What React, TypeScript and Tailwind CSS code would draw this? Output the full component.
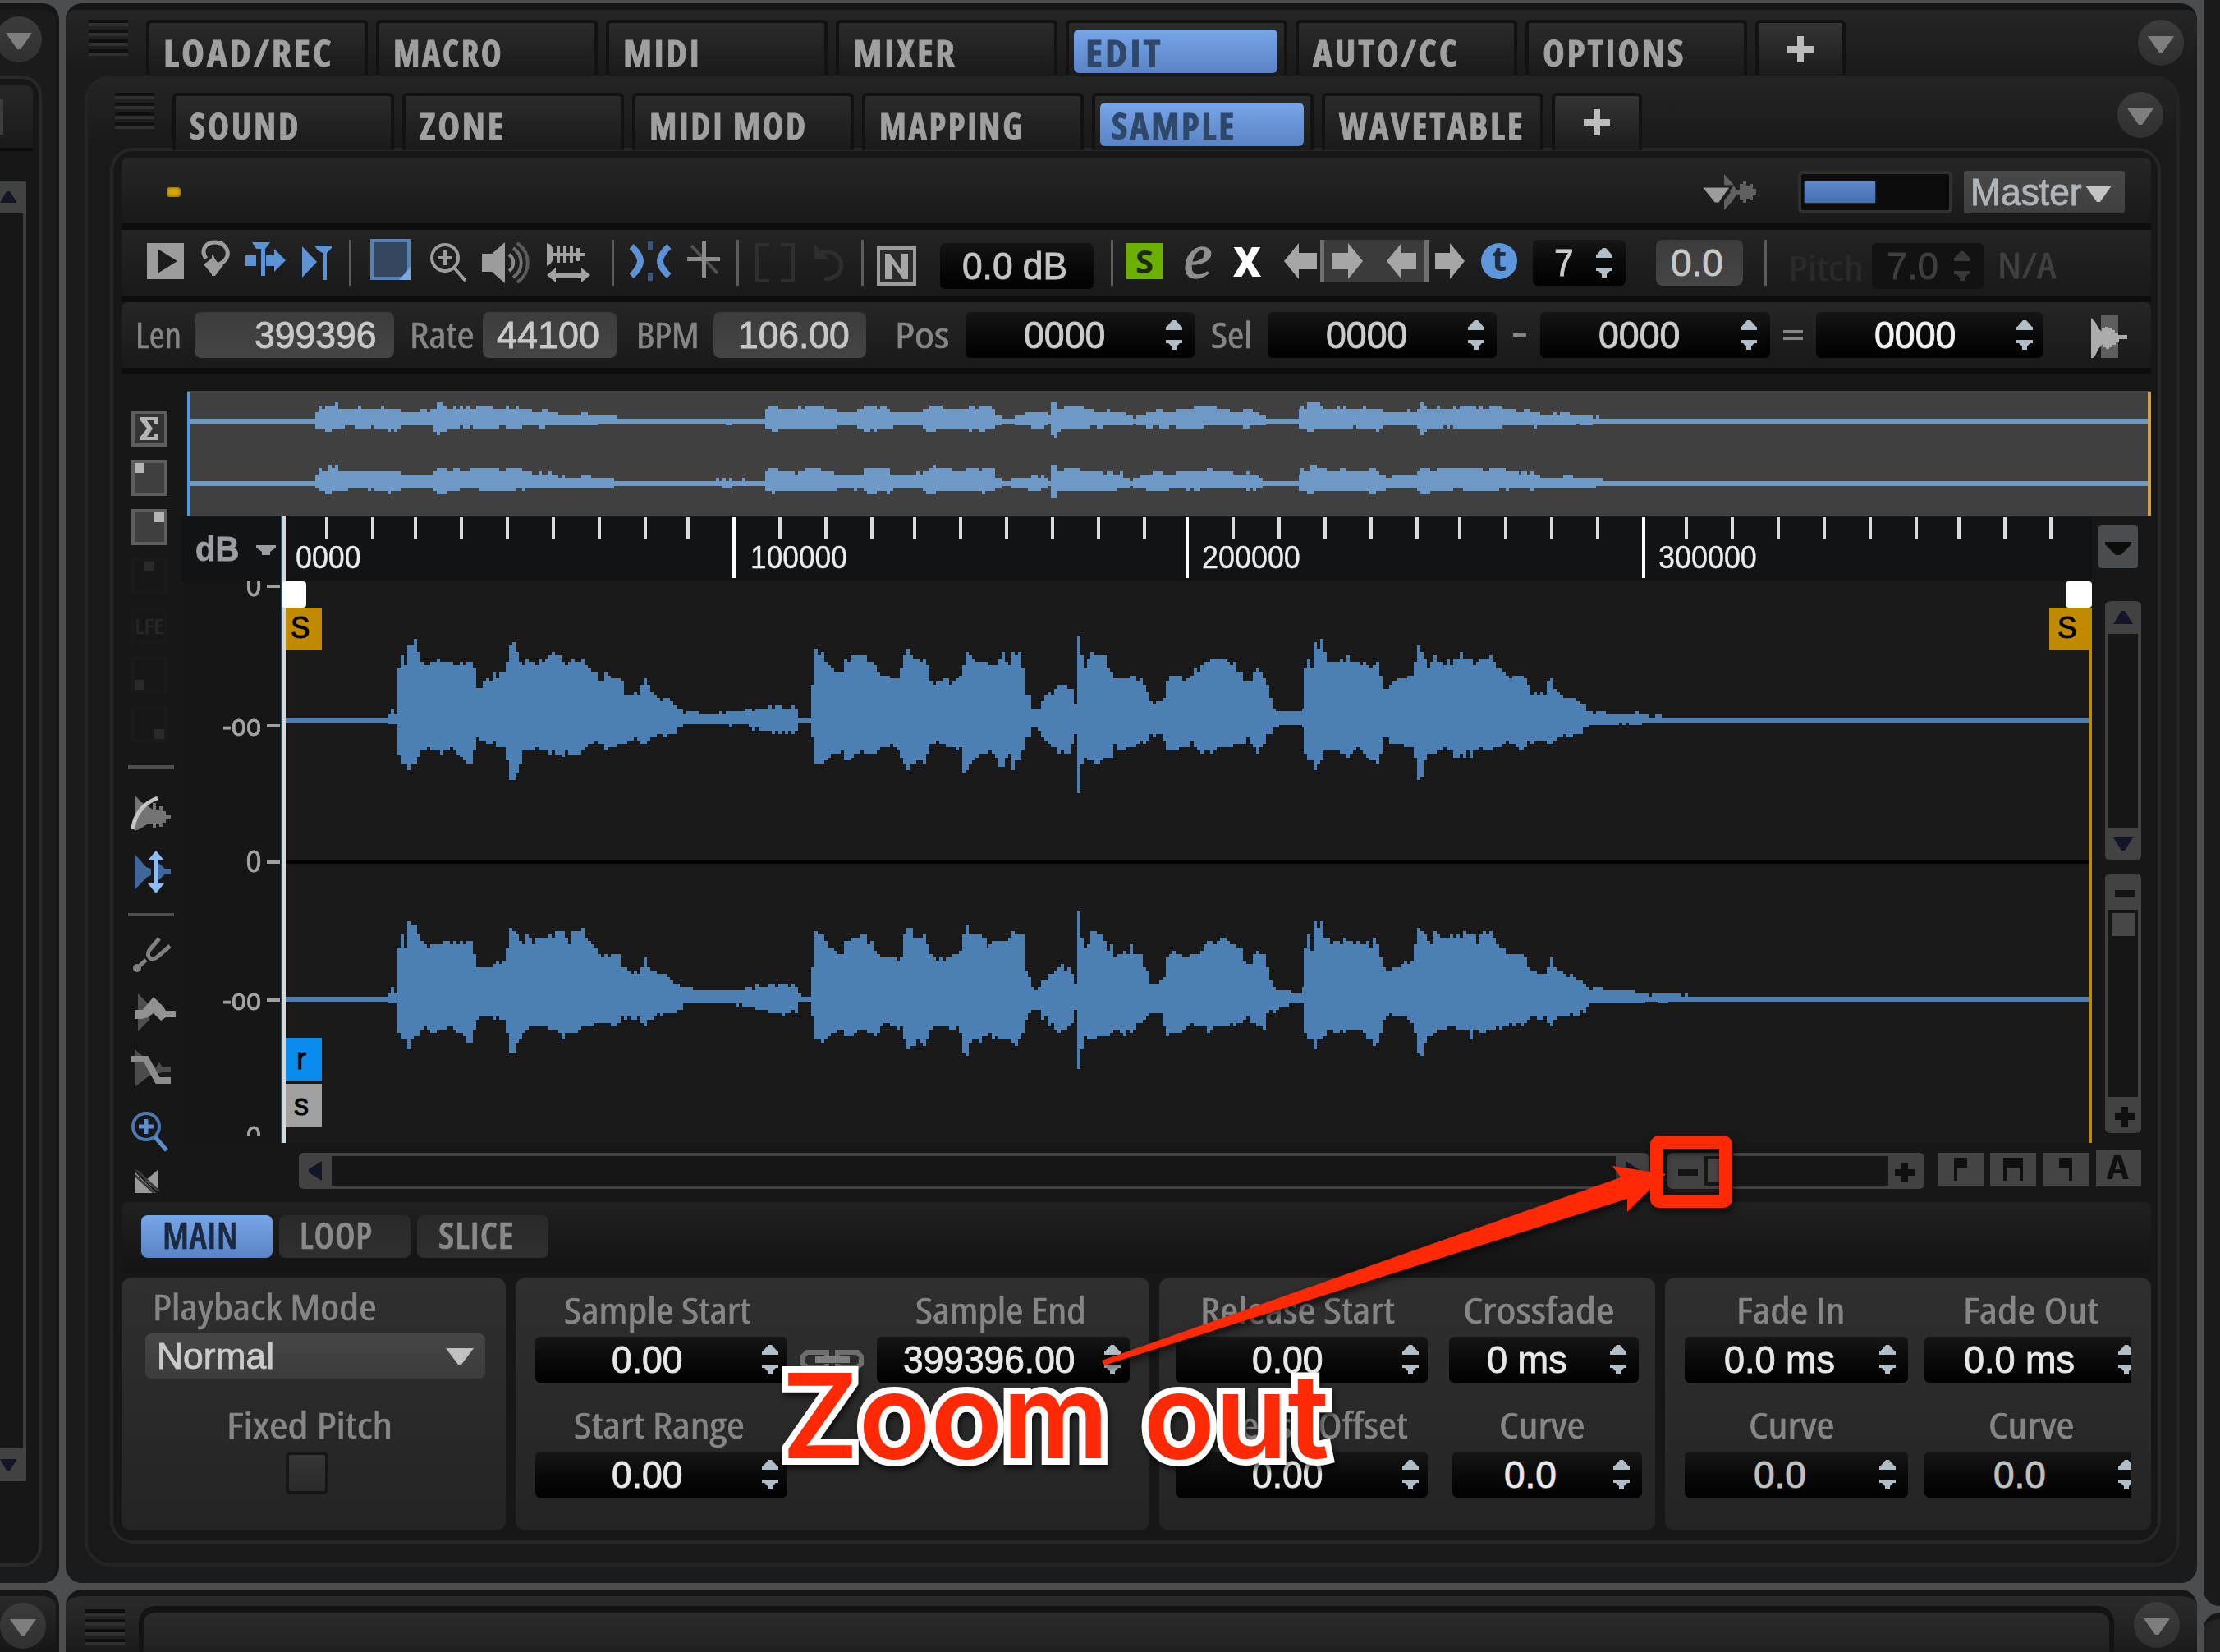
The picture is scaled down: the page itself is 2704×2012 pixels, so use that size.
import { useLayoutEffect, useRef, type ReactNode } from "react";

const SANS = "font-['Liberation_Sans',Arial,sans-serif] [-webkit-text-stroke:0.9px]";
const HUMANIST = "font-['Open_Sans','Noto_Sans',sans-serif] [-webkit-text-stroke:0.7px]";

/* Text squeezed or stretched horizontally to the width of its box. */
function Fit({ className = "", children }: { className?: string; children: ReactNode }) {
  const box = useRef<HTMLSpanElement>(null);
  const text = useRef<HTMLSpanElement>(null);
  useLayoutEffect(() => {
    if (box.current && text.current) {
      text.current.style.transform = `scaleX(${box.current.clientWidth / text.current.offsetWidth})`;
    }
  });
  return (
    <span ref={box} className={`block shrink-0 ${className}`}>
      <span ref={text} className="inline-block origin-left whitespace-pre">
        {children}
      </span>
    </span>
  );
}

/* ---------- waveform data ---------- */

type Tile = { x: number; y: number; sx: number; top: string; bottom: string };
const SY = 2.8;

const even = (n: number) => Math.round(n / 2) * 2;

function steps(tiles: Tile[], side: "top" | "bottom") {
  return tiles.flatMap((t) =>
    t[side].split(" ").map((p) => {
      const [x, y] = p.split(",").map(Number);
      return [even(t.x + x / t.sx), Math.round(t.y + y / SY)] as const;
    }),
  );
}

function wavePath(tiles: Tile[], end: number) {
  const top = steps(tiles, "top");
  const bottom = steps(tiles, "bottom");
  let d = `M${top[0][0]} ${top[0][1]}`;
  for (const [x, y] of top.slice(1)) d += `H${x}V${y}`;
  d += `H${end}`;
  for (let i = bottom.length - 1; i >= 0; i--) d += `V${bottom[i][1]}H${bottom[i][0]}`;
  return d + "Z";
}

const MAIN_L: Tile[] = [
  {
    x: 130, y: 440, sx: 1.742,
    top: "380,1215 596,1205 603,1183 610,1205 617,1048 624,1003 631,1037 638,969 652,947 659,992 666,1026 673,1037 687,1026 701,1015 708,1026 735,1037 749,1026 756,1037 763,1026 777,1048 784,1115 798,1093 805,1082 812,1093 819,1060 826,1082 833,1060 847,1026 854,969 861,958 868,992 875,1026 882,1037 889,1015 896,1026 910,1037 917,1015 924,1026 931,1015 938,1003 945,992 952,1003 966,1026 973,1037 980,1026 987,1015 994,1026 1008,1015 1015,1037 1022,1048 1029,1060 1043,1093 1056,1060 1063,1071 1070,1082 1091,1093 1098,1138 1119,1127 1126,1138 1133,1104 1140,1082 1147,1104 1154,1127 1161,1138 1168,1149 1175,1160 1182,1149 1196,1160 1203,1172 1210,1183 1224,1205 1231,1194 1259,1205 1300,1194 1307,1205 1314,1194 1356,1183 1370,1194 1377,1183 1405,1172 1412,1183 1419,1172 1433,1183 1454,1172 1461,1183 1468,1215",
    bottom: "380,1231 596,1238 617,1340 624,1372 638,1395 645,1372 659,1350 666,1328 680,1317 687,1328 708,1340 715,1328 729,1317 736,1328 743,1340 750,1350 757,1361 764,1372 777,1328 784,1283 791,1295 805,1305 819,1295 826,1317 847,1361 854,1428 868,1406 875,1372 882,1328 910,1317 917,1328 938,1340 945,1328 952,1340 966,1350 973,1328 980,1340 1008,1328 1015,1317 1022,1305 1036,1295 1043,1305 1057,1328 1064,1317 1085,1305 1105,1295 1119,1283 1126,1295 1133,1305 1147,1295 1154,1283 1168,1272 1182,1283 1189,1272 1210,1250 1224,1238 1321,1250 1328,1238 1363,1250 1370,1260 1377,1250 1384,1260 1412,1272 1419,1260 1426,1272 1433,1260 1440,1272 1447,1260 1454,1272 1460,1260 1468,1231",
  },
  {
    x: 980, y: 460, sx: 1.742,
    top: "0,1159 14,1048 21,925 28,947 35,936 42,969 49,981 56,992 63,1003 84,958 91,969 98,947 133,969 147,981 154,1003 161,1015 182,1026 203,992 210,947 217,925 224,947 231,958 245,969 252,958 259,981 266,1037 273,1048 280,1037 294,1026 308,1048 315,1037 322,1026 329,1015 336,981 343,936 350,947 357,958 364,969 391,981 412,958 419,936 426,969 433,981 440,936 447,947 454,936 461,992 468,1082 482,1127 503,1104 510,1082 517,1071 524,1082 531,1060 538,1048 559,1060 572,1115 579,880 586,947 593,992 600,958 607,936 614,947 642,992 649,1003 656,1026 691,1015 705,1037 712,1026 719,1048 726,1071 733,1104 740,1115 747,1104 761,1093 768,1037 775,1015 803,1037 810,1026 817,1015 824,992 831,1003 838,981 845,969 859,958 894,969 901,981 908,969 915,1003 929,1037 950,1003 957,992 964,1003 971,1026 978,1048 985,1093 992,1127 999,1138 1054,1127 1060,992 1067,958 1074,992 1081,902 1088,925 1095,891 1102,936 1109,969 1137,958 1144,969 1151,947 1158,969 1179,981 1186,969 1193,981 1200,992 1207,981 1214,969 1221,1015 1228,1060 1242,1048 1249,1037 1256,1026 1277,1015 1291,969 1298,914 1305,936 1312,958 1319,992 1326,969 1333,947 1340,969 1354,981 1361,958 1368,981 1375,958 1389,936 1396,958 1417,981 1424,969 1431,958 1452,947 1459,969 1466,992 1480,1003 1487,1015 1494,1026 1501,1015",
    bottom: "0,1175 14,1227 21,1317 42,1305 49,1295 56,1283 77,1272 84,1305 98,1295 105,1283 119,1272 126,1283 154,1272 161,1260 182,1250 189,1260 196,1272 203,1295 210,1317 217,1338 224,1317 238,1305 252,1317 259,1283 266,1250 280,1238 287,1250 301,1260 322,1272 329,1260 336,1350 343,1338 350,1317 357,1305 364,1295 371,1283 391,1272 398,1283 405,1295 412,1328 426,1295 433,1283 440,1338 447,1305 461,1272 468,1227 482,1193 496,1205 503,1227 510,1238 517,1250 524,1260 538,1283 545,1272 552,1283 566,1250 572,1215 579,1417 586,1317 593,1295 600,1305 614,1317 628,1305 635,1295 656,1250 663,1272 684,1260 705,1250 712,1238 719,1250 726,1238 733,1215 740,1227 747,1215 761,1238 768,1272 796,1260 817,1238 824,1260 831,1272 838,1283 845,1272 859,1283 866,1272 873,1260 908,1250 936,1227 943,1250 950,1260 957,1283 964,1260 971,1250 978,1215 992,1193 1006,1183 1054,1193 1060,1283 1067,1305 1081,1338 1088,1317 1095,1305 1102,1272 1137,1283 1151,1295 1158,1283 1165,1272 1172,1260 1179,1272 1186,1283 1193,1295 1200,1305 1214,1317 1221,1283 1228,1227 1242,1250 1270,1260 1291,1295 1298,1372 1305,1361 1312,1305 1319,1283 1340,1272 1354,1260 1361,1272 1375,1295 1389,1283 1396,1295 1403,1272 1410,1295 1417,1272 1431,1260 1438,1272 1459,1260 1480,1250 1487,1238 1494,1250 1508,1260",
  },
  {
    x: 1850, y: 460, sx: 1.836,
    top: "0,1015 11,1026 18,1048 26,1082 33,1071 40,1082 48,1071 55,1082 62,1037 70,1026 77,1060 84,1071 92,1082 99,1093 129,1104 136,1115 151,1138 165,1149 173,1138 195,1149 261,1138 268,1149 290,1159 305,1149 319,1159",
    bottom: "0,1272 11,1260 18,1238 26,1250 33,1238 62,1250 77,1238 84,1227 99,1215 106,1227 121,1215 143,1193 158,1183 224,1175 231,1183 238,1175 246,1183 275,1175",
  },
];

const MAIN_R: Tile[] = [
  {
    x: 130, y: 980, sx: 1.742,
    top: "380,655 596,644 603,622 610,644 617,488 624,443 631,488 638,398 645,409 659,443 666,465 673,476 680,488 687,476 715,465 729,476 736,465 743,476 750,465 757,476 764,465 777,510 784,555 819,544 826,533 833,544 840,533 847,488 854,421 861,432 868,443 875,465 882,476 889,443 896,454 903,476 910,454 938,443 945,454 952,432 973,454 980,476 987,432 1008,421 1015,454 1022,465 1029,476 1036,488 1043,510 1050,521 1057,510 1064,521 1071,510 1091,555 1105,566 1112,577 1119,566 1126,577 1133,555 1140,521 1147,555 1154,566 1168,577 1189,588 1196,600 1203,611 1217,622 1245,633 1356,622 1370,633 1377,611 1384,622 1405,611 1419,622 1426,611 1447,622 1454,611 1461,622 1468,644 1475,655",
    bottom: "380,672 596,678 617,778 624,801 638,834 645,801 652,790 666,768 673,756 680,768 687,778 701,768 722,756 736,768 743,778 757,790 764,812 777,768 784,734 791,723 819,734 826,723 833,734 847,778 854,846 868,812 875,801 882,778 889,768 896,756 938,768 959,778 966,801 973,778 1001,768 1008,756 1036,745 1071,756 1085,745 1091,723 1098,734 1105,723 1112,734 1126,723 1133,745 1140,756 1147,734 1161,723 1168,712 1175,723 1182,712 1210,700 1224,678 1335,689 1342,678 1349,689 1377,700 1405,712 1433,723 1440,712 1454,700 1461,712 1468,672",
  },
  {
    x: 980, y: 1000, sx: 1.742,
    top: "0,599 14,499 21,375 28,386 42,409 49,432 63,443 70,454 84,409 98,398 119,386 133,420 140,409 147,443 154,454 161,465 196,476 203,465 210,386 217,364 231,398 252,386 259,420 266,454 273,465 280,476 287,465 294,476 301,465 315,454 329,443 336,386 343,353 350,386 378,398 385,432 391,420 398,409 433,398 440,375 447,386 468,510 475,532 482,566 489,577 496,566 503,543 517,521 531,510 538,499 545,487 552,510 559,499 566,521 572,555 579,308 586,398 593,432 600,420 607,375 621,386 635,409 642,443 649,420 656,465 663,454 677,443 684,454 691,420 698,454 719,499 726,510 733,555 754,543 761,532 768,465 775,454 782,443 789,454 803,465 817,454 838,443 845,420 852,409 866,420 873,409 880,398 894,409 901,420 915,432 929,476 936,487 950,454 957,443 964,454 978,499 985,543 992,566 999,577 1033,588 1054,566 1060,432 1067,386 1074,443 1081,342 1088,364 1095,342 1102,398 1116,420 1123,409 1137,420 1144,398 1151,409 1165,420 1172,409 1179,420 1193,409 1200,432 1207,398 1214,420 1221,465 1228,499 1235,510 1249,499 1263,487 1270,476 1277,487 1284,476 1291,420 1298,364 1305,375 1312,386 1319,409 1326,420 1333,375 1340,386 1347,398 1368,386 1375,398 1382,386 1389,398 1396,375 1403,386 1424,420 1431,386 1438,375 1445,386 1452,375 1459,398 1466,420 1473,432 1487,454",
    bottom: "0,616 14,667 21,745 35,756 42,745 49,734 56,723 70,712 84,734 105,723 112,712 133,723 147,734 154,723 161,700 168,689 182,700 196,712 203,700 210,745 217,778 224,768 238,745 245,756 252,768 259,745 266,712 273,700 308,712 322,700 329,723 336,790 343,801 350,756 357,745 371,756 378,734 391,723 398,745 405,734 412,745 440,756 447,768 454,745 461,723 468,678 475,656 482,644 503,678 510,667 517,700 524,689 531,712 538,723 545,712 559,700 566,689 572,644 579,846 586,778 593,734 600,745 621,734 649,723 656,712 670,723 677,734 684,712 691,723 698,712 705,689 719,678 726,667 733,656 761,700 768,734 775,723 803,712 810,700 817,689 824,700 852,723 859,712 866,700 901,689 908,700 915,689 929,678 936,667 943,689 957,700 971,712 978,656 985,644 992,656 999,644 1006,633 1027,622 1060,723 1067,745 1081,778 1088,745 1102,734 1109,712 1123,723 1137,712 1144,723 1151,712 1186,723 1193,745 1207,768 1214,756 1221,723 1228,678 1235,667 1242,656 1249,667 1277,678 1284,689 1291,723 1298,790 1305,801 1312,756 1319,734 1333,723 1340,712 1361,700 1382,712 1410,745 1417,712 1431,723 1445,712 1466,700 1473,712 1480,700 1494,689 1501,700 1508,689",
  },
  {
    x: 1850, y: 1000, sx: 1.836,
    top: "0,454 11,465 18,499 26,510 40,521 62,499 70,465 77,499 84,510 99,521 106,532 114,521 121,532 129,543 143,555 151,566 158,577 165,566 187,577 261,588 290,599 297,588 364,599 371,588 378,599",
    bottom: "0,689 4,700 11,689 18,678 26,667 40,678 55,667 62,689 70,700 77,678 84,667 114,656 121,667 136,644 143,656 151,633 158,622 283,616 312,622 334,616",
  },
];

const OVER_L: Tile[] = [
  {
    x: 130, y: 440, sx: 1.742,
    top: "174,196 443,174 450,152 457,163 464,152 485,141 492,163 533,152 540,163 582,152 589,163 624,174 666,163 680,174 687,163 701,141 714,152 721,163 735,152 742,163 749,152 756,163 763,152 770,163 784,152 819,163 847,152 854,163 868,152 875,163 903,174 924,163 938,174 959,185 1008,174 1022,185 1084,196 1398,163 1405,152 1426,163 1468,152 1475,163",
    bottom: "174,213 443,230 464,241 478,230 506,219 526,230 561,219 568,230 596,241 603,230 610,241 617,230 624,219 694,241 701,252 708,241 721,230 749,219 756,230 770,219 777,230 833,219 847,230 882,219 917,230 931,219 1035,219 1042,213 1314,219 1328,213 1398,230 1412,241 1426,230",
  },
  {
    x: 980, y: 460, sx: 1.742,
    top: "0,96 42,107 70,118 112,107 126,96 154,107 161,96 175,107 182,118 252,107 266,96 294,107 349,96 363,107 370,96 398,107 405,129 419,140 447,129 468,118 517,129 524,84 538,107 552,96 593,107 614,118 642,107 649,118 684,129 698,140 705,129 726,118 747,107 761,118 789,107 824,96 873,107 901,118 929,107 950,118 964,129 978,140 1047,107 1053,96 1060,107 1067,84 1095,96 1102,107 1130,96 1137,107 1144,96 1151,107 1186,96 1193,107 1228,118 1277,107 1284,118 1298,107 1305,84 1312,96 1319,107 1340,96 1347,107 1375,96 1382,107 1389,96 1424,107 1431,96 1438,107 1452,96 1480,107 1508,118",
    bottom: "0,174 70,163 112,174 126,185 140,174 147,185 154,174 189,163 252,174 259,185 280,174 349,185 356,174 370,185 384,174 405,163 419,157 447,163 482,174 510,163 517,157 524,196 531,207 538,185 545,174 607,163 621,174 635,163 698,157 705,163 726,174 740,163 754,174 775,163 789,174 845,163 929,174 943,163 978,157 1047,174 1067,185 1081,174 1165,163 1172,174 1214,185 1221,174 1228,163 1298,174 1305,196 1312,185 1319,174 1354,163 1361,174 1368,163 1375,174 1480,163",
  },
  {
    x: 1850, y: 460, sx: 1.836,
    top: "0,118 11,107 26,118 48,129 77,118 84,129 92,118 114,129 165,140 173,129 180,140",
    bottom: "0,163 33,174 40,163 129,157 136,163 165,157",
  },
];

const OVER_R: Tile[] = [
  {
    x: 130, y: 440, sx: 1.742,
    top: "174,409 443,387 450,365 457,376 471,353 478,365 485,353 492,376 624,387 694,376 701,365 721,376 735,365 749,376 770,365 833,376 847,365 882,376 903,387 917,376 924,387 938,376 945,387 959,398 966,387 973,398 1008,387 1029,398 1077,409 1293,398 1300,409 1307,398 1314,409 1321,398 1328,409 1349,398 1356,409 1398,376 1405,365 1426,376 1461,387 1468,376",
    bottom: "174,425 443,432 450,442 464,453 478,442 513,432 547,432 554,442 561,432 568,442 596,453 603,442 624,432 694,442 701,453 721,442 749,432 791,442 868,432 882,442 889,432 1077,425 1307,432 1328,425 1398,442 1412,453 1419,442",
  },
  {
    x: 980, y: 460, sx: 1.742,
    top: "0,308 35,319 63,330 126,308 182,330 238,319 245,330 252,319 266,308 273,297 280,308 315,319 343,308 370,319 377,308 405,342 419,353 440,342 482,330 496,342 503,330 510,342 517,353 524,297 538,319 552,308 586,319 635,330 642,319 656,330 670,319 677,342 691,353 698,342 712,330 740,319 761,330 789,319 852,308 866,319 908,330 936,319 943,330 964,342 971,353 1047,330 1053,308 1060,319 1074,297 1088,308 1109,319 1137,308 1151,319 1200,308 1214,319 1221,330 1235,342 1249,330 1298,319 1305,308 1326,319 1340,308 1438,319 1452,308 1487,319",
    bottom: "0,386 70,375 105,386 112,375 126,386 133,397 154,386 175,397 182,386 189,375 252,386 259,397 280,386 377,397 384,386 405,375 419,369 440,375 475,386 503,375 517,369 524,409 538,386 663,375 691,369 698,375 726,386 775,375 810,386 817,375 824,386 838,375 936,386 943,375 950,386 957,375 971,369 1047,386 1067,397 1081,386 1200,397 1214,386 1235,375 1298,386 1305,397 1326,386 1375,375 1396,386 1473,375 1487,386 1494,375",
  },
  {
    x: 1850, y: 460, sx: 1.836,
    top: "0,330 4,319 18,330 26,319 33,330 48,342 99,330 121,342 187,353",
    bottom: "0,375 26,386 33,375 173,369",
  },
];

const MINOR_TICKS = [
  398, 454, 506, 562, 618, 674, 730, 786, 838, 950, 1006, 1062, 1114, 1170, 1226, 1282, 1338, 1394, 1502, 1558, 1614,
  1670, 1726, 1778, 1834, 1890, 1946, 2054, 2110, 2166, 2222, 2278, 2334, 2386, 2442, 2498,
];
const MAJOR_TICKS = [894, 1446, 2002];

/* ---------- small parts ---------- */

function Grip() {
  return (
    <div className="flex h-[44px] w-12 shrink-0 flex-col gap-1">
      {[0, 1, 2, 3].map((i) => (
        <div key={i} className="h-2 shrink-0 border-t-4 border-[#101010] bg-[#303030]" />
      ))}
    </div>
  );
}

function RoundMenu({ className = "" }: { className?: string }) {
  return (
    <div
      className={`flex h-14 w-14 shrink-0 items-center justify-center rounded-full bg-linear-to-b from-[#3c3c3c] to-[#303030] ${className}`}
    >
      <svg viewBox="0 0 32 20" className="mt-1 h-5 w-8 fill-[#7e7e7e]">
        <path d="M0 0h32L18 20h-4z" />
      </svg>
    </div>
  );
}

function Tab({ w, label, active = false }: { w: string; label: string; active?: boolean }) {
  return (
    <div className="flex h-full w-[270px] shrink-0 rounded-t-md border-x-4 border-t-4 border-[#121212] bg-linear-to-b from-[#2b2b2b] to-[#1a1a1a]">
      {active ? (
        <div className="mt-2 ml-[6px] flex h-[53px] w-[248px] items-center rounded-md bg-linear-to-b from-[#77a6e9] to-[#5a83c5] pt-[2px] pl-[14px] text-[#2f4768]">
          <Fit className={w}>{label}</Fit>
        </div>
      ) : (
        <div className="mt-2 flex h-[53px] items-center pt-[2px] pl-[17px] text-[#a0a0a0]">
          <Fit className={w}>{label}</Fit>
        </div>
      )}
    </div>
  );
}

function PlusTab() {
  return (
    <div className="flex h-full w-[110px] shrink-0 justify-center rounded-t-md border-x-4 border-t-4 border-[#121212] bg-linear-to-b from-[#343434] to-[#1c1c1c] pt-4">
      <svg viewBox="0 0 32 32" className="h-8 w-8 fill-[#bcbcbc]">
        <path d="M12 0h8v12h12v8H20v12h-8V20H0v-8h12z" />
      </svg>
    </div>
  );
}

const TAB_TEXT =
  "font-['Open_Sans','Noto_Sans',sans-serif] text-[45px] leading-[53px] font-bold tracking-[0.06em] [font-stretch:75%] [-webkit-text-stroke:0.8px]";

function Stepper({ className = "" }: { className?: string }) {
  return (
    <svg viewBox="0 0 20 36" className={`h-9 w-5 shrink-0 fill-[#b2bec7] ${className}`}>
      <path d="M8 0h4l7 8h1v4H0V8h1zM0 24h20v4h-3l-4 4v4H7v-4l-4-4H0z" />
    </svg>
  );
}

function Field({
  box,
  text,
  step,
  color = "text-[#cccccc]",
  children,
}: {
  box: string;
  text: string;
  step: string;
  color?: string;
  children: ReactNode;
}) {
  return (
    <div
      className={`flex h-14 shrink-0 items-center overflow-hidden rounded-md bg-linear-to-b from-[#161616] to-[#020202] ${SANS} text-[46px] leading-none ${color} ${box}`}
    >
      <Fit className={text}>{children}</Fit>
      <Stepper className={`ml-auto ${step}`} />
    </div>
  );
}

function GrayValue({ box, text, children }: { box: string; text: string; children: ReactNode }) {
  return (
    <div
      className={`flex h-14 shrink-0 items-center rounded-lg bg-linear-to-b from-[#3c3c3c] to-[#454545] ${SANS} text-[46px] leading-none text-[#c8c8c8] ${box}`}
    >
      <Fit className={text}>{children}</Fit>
    </div>
  );
}

const Sep = ({ className }: { className: string }) => <div className={`h-14 w-[3px] shrink-0 bg-[#5c5c5c] ${className}`} />;

function Icon({ w, h, className, children }: { w: number; h: number; className: string; children: ReactNode }) {
  return (
    <svg width={w} height={h} viewBox={`0 0 ${w} ${h}`} className={`shrink-0 ${className}`}>
      {children}
    </svg>
  );
}

/* ---------- bars ---------- */

function SampleHeader() {
  return (
    <div className="flex h-20 shrink-0 items-center rounded-t-lg bg-linear-to-b from-[#262626] to-[#191919]">
      <div className="ml-[55px] mt-1 h-3 w-[17px] rounded-sm bg-[#dba800] shadow-[inset_0_0_4px_#6b5200]" />
      <Icon w={69} h={45} className="ml-[1851px] mt-1">
        <path d="M29 0l10 11 5 8h4v-7h4v-3h4v5h4v-2h4v6h4v8h-4v6h-4v-2h-4v5h-4v-4h-4v-6h-4l-5 8-10 11V32l8-10-8-9z" fill="#606060" />
        <path d="M0 15h38L23 36h-6z" fill="#9c9c9c" stroke="#1e1e1e" strokeWidth="3" />
      </Icon>
      <div className="ml-[50px] mt-1 flex h-[52px] w-[188px] shrink-0 items-center rounded-md border-4 border-[#303030] bg-[#0c0c0c] pl-1">
        <div className="h-[26px] w-[86px] bg-linear-to-b from-[#5d88cb] to-[#466fae] shadow-[0_0_2px_#466fae]" />
      </div>
      <div
        className={`ml-[14px] mt-1 flex h-[52px] w-[196px] shrink-0 items-center rounded-sm bg-linear-to-b from-[#484848] to-[#3f3f3f] pl-2 ${SANS} text-[46px] leading-none text-[#b0b5ba]`}
      >
        <Fit className="w-[136px]">Master</Fit>
        <Icon w={32} h={20} className="ml-1 mt-1 fill-[#c4c4c4]">
          <path d="M0 0h32L18 20h-4z" />
        </Icon>
      </div>
    </div>
  );
}

function Toolbar() {
  return (
    <div className="flex h-20 shrink-0 items-center bg-linear-to-b from-[#242424] to-[#191919]">
      <Icon w={45} h={44} className="ml-[31px] -mt-1">
        <path d="M0 0h45v44H0z" fill="#9c9c9c" />
        <path d="M13 7l24 15-24 15z" fill="#1c1c1c" />
      </Icon>
      <Icon w={37} h={44} className="ml-5 -mt-3">
        <path d="M7 23C0 13 6 3 18 3s20 12 12 22c-3 4-7 5-12 6" fill="none" stroke="#9c9c9c" strokeWidth="5" />
        <path d="M17 20v22h-3L4 30l3-2z" fill="#9c9c9c" />
        <path d="M14 18v26h4l10-13-6-2z" fill="#9c9c9c" />
      </Icon>
      <Icon w={49} h={42} className="ml-[18px] -mt-2">
        <path d="M8 0h22l-6 8v33h-5V8h-6zM0 16h13v13H0zM25 16h10V8l14 14-14 14v-7H25z" fill="#5c92d6" />
      </Icon>
      <Icon w={36} h={42} className="ml-5">
        <path d="M0 1l18 19L0 39zM15 0h21v3l-6 6v33h-5V9l-6-3z" fill="#5c92d6" />
      </Icon>
      <Sep className="ml-[21px]" />
      <Icon w={49} h={50} className="ml-[23px] -mt-2">
        <path d="M2 2h45v46H2z" fill="#35475f" stroke="#5580b8" strokeWidth="4" />
        <path d="M49 34v16H35z" fill="#7aa8e4" />
      </Icon>
      <Icon w={45} h={48} className="ml-6">
        <circle cx="18" cy="18" r="16" fill="none" stroke="#9c9c9c" strokeWidth="4" />
        <path d="M9 18h18M18 9v18M29 30l14 16" stroke="#9c9c9c" strokeWidth="4" fill="none" />
      </Icon>
      <Icon w={58} h={50} className="ml-[18px]">
        <path d="M0 14h12L28 0v50L12 36H0z" fill="#9c9c9c" />
        <path d="M33 15c7 5 7 15 0 20" fill="none" stroke="#8c8c8c" strokeWidth="4" />
        <path d="M38 7c13 9 13 27 0 36" fill="none" stroke="#6c6c6c" strokeWidth="4" />
        <path d="M43 1c17 12 17 36 0 48" fill="none" stroke="#5c5c5c" strokeWidth="4" />
      </Icon>
      <Icon w={53} h={48} className="ml-[21px]">
        <path d="M0 0l5 2 3 6v4h4V4h4v8h4V4h4v8h4V4h4v8h4V6h4v6h6v4h-6v6h-4v-6h-4v8h-4v-8h-4v8h-4v-8h-4v8h-4v-8H8v4l-4 6-4 2zM0 39l11-9v6h31v-6l11 9-11 9v-6H11v6z" fill="#a2a2a2" />
      </Icon>
      <Sep className="ml-[26px]" />
      <Icon w={54} h={48} className="ml-[17px] -mt-1">
        <path d="M4 6c5 4 11 12 11 18S9 38 4 42M50 6c-5 4-11 12-11 18s6 14 11 18" fill="none" stroke="#5c92d6" strokeWidth="8" />
        <path d="M24 0h6v10h-6zM24 38h6v10h-6z" fill="#36567f" />
      </Icon>
      <Icon w={40} h={44} className="ml-[18px] -mt-2">
        <path d="M5 5l32 34" stroke="#505050" strokeWidth="4" />
        <path d="M0 19h18V0h5v19h17v5H23v20h-5V24H0z" fill="#8c8c8c" />
      </Icon>
      <Sep className="ml-5" />
      <Icon w={48} h={48} className="ml-5">
        <path d="M17 2H2v44h15M31 2h15v44H31" fill="none" stroke="#2f2f2f" strokeWidth="4" />
      </Icon>
      <Icon w={40} h={44} className="ml-[22px]">
        <path d="M4 12c22-10 34 6 30 18-2 7-10 12-20 12" fill="none" stroke="#2e2e2e" strokeWidth="5" />
        <path d="M2 0v18h18z" fill="#2e2e2e" />
      </Icon>
      <Sep className="ml-[19px]" />
      <Icon w={48} h={48} className="ml-4 mt-2">
        <path d="M2 2h44v44H2z" fill="#2b2b2b" stroke="#9c9c9c" strokeWidth="4" />
        <path d="M10 40V9h6l14 20V9h8v31h-6L18 20v20z" fill="#a6a6a6" />
      </Icon>
      <div className={`ml-[29px] mt-2 flex h-14 w-[187px] shrink-0 items-center rounded-md bg-linear-to-b from-[#141414] to-[#020202] pl-[27px] ${SANS} text-[46px] leading-none text-[#c4c4c4]`}>
        <Fit className="w-[128px]">0.0 dB</Fit>
      </div>
      <Sep className="ml-[21px]" />
      <div className="ml-4 -mt-1 flex h-11 w-11 shrink-0 items-center justify-center bg-[#6bb000] font-['Open_Sans',sans-serif] text-[40px] leading-none font-bold text-[#1d2a0c]">S</div>
      <div className="ml-6 -mt-4 flex h-12 w-[38px] shrink-0 items-center justify-center font-['Liberation_Serif',serif] text-[78px] leading-none text-[#8f8f8f] italic [-webkit-text-stroke:1.5px]">e</div>
      <div className="ml-6 -mt-1 flex h-11 w-[34px] shrink-0 items-center font-['Open_Sans',sans-serif] text-[50px] leading-none font-extrabold text-white">
        <Fit className="w-[34px]">X</Fit>
      </div>
      <Icon w={40} h={44} className="ml-7 -mt-1 fill-[#a6a6a6]">
        <path d="M0 22L18 0v12h22v20H18v12z" />
      </Icon>
      <div className="ml-1 -mt-1 flex h-[52px] w-[132px] shrink-0 items-center justify-between border-x-[5px] border-[#707070] bg-[#3b3b3b] px-[10px]">
        <Icon w={37} h={44} className="fill-[#a6a6a6]">
          <path d="M37 22L19 0v12H0v20h19v12z" />
        </Icon>
        <Icon w={36} h={44} className="fill-[#a6a6a6]">
          <path d="M0 22L18 0v12h18v20H18v12z" />
        </Icon>
      </div>
      <Icon w={36} h={44} className="ml-2 -mt-1 fill-[#a6a6a6]">
        <path d="M36 22L18 0v12H0v20h18v12z" />
      </Icon>
      <div className="ml-5 -mt-1 flex h-11 w-11 shrink-0 items-center justify-center rounded-full bg-[#5f97dc] pb-2 font-['Open_Sans',sans-serif] text-[42px] leading-none font-bold text-[#1e2d42]">t</div>
      <Field box="ml-[19px] w-[113px]" text="ml-[26px] w-[24px]" step="mr-[16px]">7</Field>
      <GrayValue box="ml-[37px] w-[106px]" text="ml-[18px] w-[64px]">0.0</GrayValue>
      <Sep className="ml-[26px]" />
      <div className={`ml-[26px] mt-3 ${HUMANIST} text-[42px] leading-none text-[#2a2a2a] [font-stretch:75%]`}>
        <Fit className="w-[92px]">Pitch</Fit>
      </div>
      <div className={`mt-2 ml-[10px] flex h-14 w-[136px] shrink-0 items-center rounded-md bg-[#121212] ${SANS} text-[46px] leading-none text-[#3e3e3e]`}>
        <Fit className="ml-[18px] w-[63px]">7.0</Fit>
        <svg viewBox="0 0 20 36" className="mr-4 ml-auto h-9 w-5 shrink-0 fill-[#383838]">
          <path d="M8 0h4l7 8h1v4H0V8h1zM0 24h20v4h-3l-4 4v4H7v-4l-4-4H0z" />
        </svg>
      </div>
      <div className={`ml-[17px] mt-1 ${HUMANIST} text-[44px] leading-none text-[#404040] [font-stretch:75%]`}>
        <Fit className="w-[71px]">N/A</Fit>
      </div>
    </div>
  );
}

const LABEL = `${HUMANIST} text-[43px] leading-[48px] text-[#868686] [font-stretch:75%]`;

function InfoBar() {
  return (
    <div className="flex h-20 shrink-0 items-center rounded-t-lg bg-linear-to-b from-[#262626] to-[#191919]">
      <Fit className={`ml-[17px] w-[56px] ${LABEL}`}>Len</Fit>
      <GrayValue box="ml-4 w-[243px]" text="ml-[73px] w-[149px]">399396</GrayValue>
      <Fit className={`ml-[19px] w-[79px] ${LABEL}`}>Rate</Fit>
      <GrayValue box="ml-[10px] w-[163px]" text="ml-[17px] w-[125px]">44100</GrayValue>
      <Fit className={`ml-[24px] w-[77px] ${LABEL}`}>BPM</Fit>
      <GrayValue box="ml-[17px] w-[186px]" text="ml-[30px] w-[136px]">106.00</GrayValue>
      <Fit className={`ml-[35px] w-[66px] ${LABEL}`}>Pos</Fit>
      <Field box="ml-5 w-[279px]" text="ml-[71px] w-[99px]" step="mr-[15px]">0000</Field>
      <Fit className={`ml-[20px] w-[50px] ${LABEL}`}>Sel</Fit>
      <Field box="ml-[19px] w-[279px]" text="ml-[71px] w-[99px]" step="mr-[15px]">0000</Field>
      <div className="ml-5 h-1 w-4 shrink-0 bg-[#858585]" />
      <Field box="ml-[17px] w-[280px]" text="ml-[71px] w-[99px]" step="mr-4">0000</Field>
      <div className="ml-4 h-3 w-6 shrink-0 border-y-4 border-[#858585]" />
      <Field box="ml-4 w-[276px]" text="ml-[71px] w-[99px]" step="mr-3" color="text-[#f2f2f2]">0000</Field>
      <Icon w={45} h={52} className="ml-[59px] mt-1">
        <path d="M12 0h21v52H12z" fill="#5e5e5e" />
        <path d="M0 3l5 5 4 8 4 4v-4h4v-2h4v2h4v2h4v3h4v3h11v5H34v4h-4v3h-4v3h-4v2h-4v-2h-4v-4l-5 6-4 8-5 6z" fill="#acacac" />
      </Icon>
    </div>
  );
}

/* ---------- editor ---------- */

function ChannelBox({ on, dot }: { on?: boolean; dot: string }) {
  return (
    <div className={`h-11 w-11 shrink-0 border-4 ${on ? "border-[#5e5e5e] bg-[#3f3f3f]" : "border-[#1a1a1a] bg-[#171717]"}`}>
      <div className={`h-3 w-3 ${on ? "bg-[#b4b4b4]" : "bg-[#2a2a2a]"} ${dot}`} />
    </div>
  );
}

function ToolColumn() {
  return (
    <div className="flex w-[73px] shrink-0 flex-col pt-[44px] pl-3">
      <div className="flex flex-col gap-4">
        <div className="flex h-11 w-11 items-center justify-center border-4 border-[#5e5e5e] bg-[#333]">
          <Icon w={22} h={28} className="">
            <path d="M0 0h21v8h-4V4H8l7 10-7 10h9v-4h4v8H0v-4l8-10L0 4z" fill="#b4b4b4" />
          </Icon>
        </div>
        <ChannelBox on dot="" />
        <ChannelBox on dot="ml-auto" />
        <ChannelBox dot="mx-auto" />
        <div className={`flex h-11 w-11 items-center justify-center border-4 border-[#191919] ${HUMANIST} text-[26px] leading-none text-[#272727] [font-stretch:75%]`}>
          <Fit className="w-9">LFE</Fit>
        </div>
        <ChannelBox dot="mt-6" />
        <ChannelBox dot="mt-6 ml-auto" />
      </div>
      <div className="mt-7 -ml-1 h-1 w-14 bg-[#4f4f4f]" />
      <Icon w={52} h={44} className="mt-8">
        <path d="M4 0l8 9 6 3 8 6v-8h4v8h4v-4h4v6h4v4h6v6h-6v4h-4v5h-4v-4h-4v5h-4v-5h-6l-8 6L4 44z" fill="#747474" />
        <path d="M2 42C3 26 14 10 32 4" fill="none" stroke="#c4c4c4" strokeWidth="5" />
      </Icon>
      <Icon w={52} h={52} className="mt-6">
        <path d="M4 4l14 16 6 2v8l-6 3L4 48zM33 15l8 7h7v7h-7l-8 7z" fill="#41669b" />
        <path d="M30 0l10 12h-7v28h7L30 52 20 40h7V12h-7z" fill="#8ebcf8" />
      </Icon>
      <div className="mt-6 -ml-1 h-1 w-14 bg-[#4f4f4f]" />
      <Icon w={52} h={46} className="mt-6">
        <path d="M6 40l12-11M34 3L22 17c-5 8 3 15 10 8l15-13" fill="none" stroke="#808080" strokeWidth="5" />
        <circle cx="7" cy="39" r="5" fill="#808080" />
      </Icon>
      <Icon w={56} h={46} className="mt-6">
        <path d="M8 0l14 14v18L8 46z" fill="#505050" />
        <path d="M4 20h10L27 4l12 12 3 5h12v8H42l-6 4-4-4-5-5-7 5-7 2H4z" fill="#929292" />
      </Icon>
      <Icon w={52} h={46} className="mt-[22px]">
        <path d="M4 0l12 10 14 12 4-6 4 6h10v6H38L22 32 4 46z" fill="#4c4c4c" />
        <path d="M0 12h18l14 26h16" fill="none" stroke="#8c8c8c" strokeWidth="8" />
      </Icon>
      <Icon w={52} h={50} className="mt-[30px]">
        <circle cx="18" cy="18" r="16" fill="none" stroke="#4a78b4" strokeWidth="4" />
        <path d="M9 18h18M18 9v18M29 31l14 16" stroke="#5b8ed0" strokeWidth="5" fill="none" />
      </Icon>
      <Icon w={40} h={28} className="mt-[21px]">
        <path d="M4 2l26 26H4zM32 0v26L17 13z" fill="#9a9a9a" />
        <path d="M6 0l28 26M4 6l24 22" stroke="#3c3c3c" strokeWidth="3" />
      </Icon>
    </div>
  );
}

function Overview() {
  return (
    <svg width={2392} height={152} viewBox="228 476 2392 152" className="mt-5 ml-[7px] shrink-0 bg-[#404040]">
      <path d={wavePath(OVER_L, 2616)} fill="#6e98c6" />
      <path d={wavePath(OVER_R, 2616)} fill="#6e98c6" />
      <path d="M228 478h4v150h-4z" fill="#4f9ae6" />
      <path d="M2616 478h4v150h-4z" fill="#d3a040" />
    </svg>
  );
}

function AxisLane() {
  return (
    <div className="flex w-[121px] shrink-0 flex-col bg-[#161616]">
      <div className={`flex h-20 shrink-0 items-center bg-[#111315] pl-[17px] ${SANS} text-[43px] leading-none font-bold text-[#9a9da2]`}>
        <Fit className="w-[53px]">dB</Fit>
        <Icon w={24} h={12} className="ml-[21px] mt-1 fill-[#9a9da2]">
          <path d="M0 0h24v3l-7 5v4H7V8L0 3z" />
        </Icon>
      </div>
      <div className={`flex h-[684px] flex-col overflow-hidden ${SANS} text-[36px] leading-[36px] text-[#a4a4a4]`}>
        <div className="-mt-3 flex h-9 shrink-0 items-center pl-[79px]">
          <Fit className="w-[18px]">0</Fit>
          <div className="ml-[7px] h-1 w-4 bg-[#a0a0a0]" />
        </div>
        <div className="mt-[134px] flex h-9 shrink-0 items-center pl-[50px]">
          <Fit className="w-[47px]">-oo</Fit>
          <div className="ml-[7px] h-1 w-4 bg-[#a0a0a0]" />
        </div>
        <div className="mt-[130px] flex h-9 shrink-0 items-center pl-[79px]">
          <Fit className="w-[18px]">0</Fit>
          <div className="ml-[7px] h-1 w-4 bg-[#a0a0a0]" />
        </div>
        <div className="mt-[132px] flex h-9 shrink-0 items-center pl-[50px]">
          <Fit className="w-[47px]">-oo</Fit>
          <div className="ml-[7px] h-1 w-4 bg-[#a0a0a0]" />
        </div>
        <div className="mt-[132px] flex h-[16px] shrink-0 items-start overflow-hidden pl-[79px]">
          <Fit className="w-[18px]">0</Fit>
        </div>
      </div>
    </div>
  );
}

function Plot() {
  return (
    <div className="relative flex w-[2206px] shrink-0 flex-col bg-[#191919]">
      <div className="relative h-20 bg-[#111315] font-['Liberation_Sans',Arial,sans-serif] text-[38px] leading-none text-[#ececec] [-webkit-text-stroke:0.3px]">
        <svg width={2206} height={80} viewBox="342 628 2206 80" className="block">
          {MINOR_TICKS.map((x) => (
            <path key={x} d={`M${x - 2} 630h4v26h-4z`} fill="#dcdcdc" />
          ))}
          {MAJOR_TICKS.map((x) => (
            <path key={x} d={`M${x - 2} 630h4v74h-4z`} fill="#fff" />
          ))}
        </svg>
        <Fit className="absolute top-8 left-[18px] w-[80px]">0000</Fit>
        <Fit className="absolute top-8 left-[572px] w-[118px]">100000</Fit>
        <Fit className="absolute top-8 left-[1122px] w-[120px]">200000</Fit>
        <Fit className="absolute top-8 left-[1678px] w-[120px]">300000</Fit>
      </div>
      <svg width={2206} height={684} viewBox="342 708 2206 684" className="block">
        <path d="M348 1048h2196v4H348z" fill="#000" />
        <path d={wavePath(MAIN_L, 2544)} fill="#4c80b4" />
        <path d={wavePath(MAIN_R, 2544)} fill="#4c80b4" />
        <path d="M2544 780h4v612h-4z" fill="#bf8a0a" />
      </svg>
      <div className="absolute top-0 left-0 h-[764px] w-[6px] border-r-4 border-l-2 border-l-[#1f4f7c] border-r-[#ddd6d0]" />
      <div className="absolute top-20 left-[1px] h-8 w-[30px] rounded-sm bg-white" />
      <div className="absolute top-20 right-0 h-8 w-8 rounded-sm bg-white" />
      <div className={`absolute top-28 left-[6px] flex h-[52px] w-11 items-center pb-1 pl-[6px] ${SANS} bg-[#c08a00] text-[37px] leading-none text-black`}>
        <Fit className="w-[24px]">S</Fit>
      </div>
      <div className={`absolute top-28 right-0 flex h-[52px] w-[52px] items-center pb-1 pl-[10px] ${SANS} bg-[#c08a00] text-[37px] leading-none text-black`}>
        <Fit className="w-[24px]">S</Fit>
      </div>
      <div className={`absolute top-[636px] left-[6px] flex h-[52px] w-11 items-center justify-center bg-[#0a8bee] pr-[6px] ${SANS} text-[36px] leading-none text-black`}>r</div>
      <div className={`absolute top-[692px] left-[6px] flex h-[52px] w-11 items-center justify-center bg-[#a0a0a0] pr-[6px] ${SANS} text-[36px] leading-none text-black`}>s</div>
    </div>
  );
}

const PLUS = "M8 0h8v8h8v8h-8v8H8v-8H0V8h8z";

function SideBars() {
  return (
    <div className="flex w-[72px] shrink-0 flex-col">
      <div className="mt-3 ml-2 flex h-[52px] w-12 shrink-0 items-center justify-center rounded-sm bg-[#4a4d50]">
        <Icon w={32} h={16} className="mt-1 fill-[#0c0c0c]">
          <path d="M0 0h32v3L19 16h-6L0 3z" />
        </Icon>
      </div>
      <div className="mt-10 ml-4 flex h-[316px] w-11 shrink-0 flex-col justify-between rounded-md border-x-4 border-[#424242] bg-[#161616]">
        <div className="flex h-10 items-center justify-center rounded-t-sm bg-[#424242]">
          <Icon w={24} h={16} className="fill-[#15152a]">
            <path d="M10 0h4l10 16H0z" />
          </Icon>
        </div>
        <div className="flex h-10 items-center justify-center rounded-b-sm bg-[#424242]">
          <Icon w={24} h={16} className="fill-[#15152a]">
            <path d="M0 0h24L14 16h-4z" />
          </Icon>
        </div>
      </div>
      <div className="mt-4 ml-4 flex h-[316px] w-11 shrink-0 flex-col rounded-md border-x-4 border-[#424242] bg-[#161616]">
        <div className="flex h-11 items-center justify-center rounded-t-sm bg-[#424242] pt-1 pl-1">
          <div className="h-2 w-6 bg-[#141414]" />
        </div>
        <div className="mt-1 ml-1 h-7 w-7 bg-[#464646]" />
        <div className="mt-auto flex h-11 items-center justify-center rounded-b-sm bg-[#424242] pt-1 pl-1">
          <Icon w={24} h={24} className="fill-[#101010]">
            <path d={PLUS} />
          </Icon>
        </div>
      </div>
    </div>
  );
}

function BottomScroll() {
  return (
    <div className="flex h-[72px] shrink-0 pt-3 pl-[143px]">
      <div className="flex h-11 w-[1644px] shrink-0 justify-between rounded-md border-y-4 border-[#424242] bg-[#161616]">
        <div className="flex w-10 items-center justify-center bg-[#424242]">
          <Icon w={16} h={24} className="fill-[#15152a]">
            <path d="M16 0v24L0 14v-4z" />
          </Icon>
        </div>
        <div className="flex w-10 items-center justify-center bg-[#424242]">
          <Icon w={16} h={24} className="fill-[#15152a]">
            <path d="M0 0l16 10v4L0 24z" />
          </Icon>
        </div>
      </div>
      <div className="ml-[23px] flex h-11 w-[313px] shrink-0 rounded-md border-y-4 border-[#424242] bg-[#161616]">
        <div className="flex w-[45px] items-center justify-center bg-[#424242] pt-1 pl-1">
          <div className="h-2 w-6 bg-[#141414]" />
        </div>
        <div className="mt-1 ml-1 h-7 w-7 bg-[#464646]" />
        <div className="ml-auto flex w-11 items-center justify-center bg-[#424242]">
          <Icon w={24} h={24} className="mt-1 -ml-1 fill-[#101010]">
            <path d={PLUS} />
          </Icon>
        </div>
      </div>
      <div className="ml-4 flex h-10 w-14 shrink-0 items-center justify-center bg-[#444]">
        <Icon w={16} h={28} className="fill-[#101010]">
          <path d="M0 0h16v12H4v16H0z" />
        </Icon>
      </div>
      <div className="ml-2 flex h-10 w-14 shrink-0 items-center justify-center bg-[#444]">
        <Icon w={24} h={28} className="fill-[#101010]">
          <path d="M0 0h24v28h-4V12H4v16H0z" />
        </Icon>
      </div>
      <div className="ml-2 flex h-10 w-14 shrink-0 items-center justify-center bg-[#444]">
        <Icon w={16} h={28} className="fill-[#101010]">
          <path d="M0 0h16v28h-4V12H0z" />
        </Icon>
      </div>
      <div className="-mt-1 ml-[9px] flex h-11 w-[55px] shrink-0 items-center justify-center bg-[#444] pr-1 font-['DejaVu_Sans_Mono',monospace] text-[39px] leading-none font-bold text-[#101010]">
        <Fit className="w-[28px]">A</Fit>
      </div>
    </div>
  );
}

/* ---------- lower parameter area ---------- */

function LowerTab({ box, text, label, active }: { box: string; text: string; label: string; active?: boolean }) {
  return (
    <div
      className={`flex h-[52px] w-40 shrink-0 items-center rounded-lg pb-1 ${HUMANIST} text-[45px] leading-[48px] font-semibold tracking-[0.02em] [font-stretch:75%] ${
        active ? "bg-linear-to-b from-[#77a6e9] to-[#5a83c5] text-[#1b2a40]" : "bg-linear-to-b from-[#2a2a2a] to-[#2f2f2f] text-[#8a8a8a]"
      } ${box}`}
    >
      <Fit className={text}>{label}</Fit>
    </div>
  );
}

const PANEL = "flex h-[308px] shrink-0 rounded-xl bg-linear-to-b from-[#2f2f2f] to-[#242424] pt-4";

function Params() {
  return (
    <div className="mt-[6px] flex gap-3">
      <div className={`${PANEL} w-[468px] flex-col`}>
        <Fit className={`-mt-1 ml-[38px] h-12 w-[273px] ${LABEL}`}>Playback Mode</Fit>
        <div className={`mt-2 ml-[29px] flex h-[55px] w-[414px] shrink-0 items-center rounded-lg bg-linear-to-b from-[#464646] to-[#3c3c3c] pl-[14px] ${SANS} text-[45px] leading-none text-[#cacaca]`}>
          <Fit className="w-[143px]">Normal</Fit>
          <Icon w={34} h={20} className="mr-[14px] ml-auto fill-[#c0c0c0]">
            <path d="M0 0h34L19 20h-4z" />
          </Icon>
        </div>
        <Fit className={`mt-[33px] ml-[128px] h-12 w-[202px] ${LABEL}`}>Fixed Pitch</Fit>
        <div className="mt-2 ml-[200px] h-[52px] w-[52px] shrink-0 rounded-md border-4 border-[#161616] bg-linear-to-b from-[#363636] to-[#2a2a2a]" />
      </div>

      <div className={`${PANEL} w-[772px] pl-6`}>
        <div className="flex w-[307px] flex-col">
          <Fit className={`ml-[35px] h-12 w-[228px] ${LABEL}`}>Sample Start</Fit>
          <Field box="mt-2" text="ml-[93px] w-[87px]" step="mr-[11px]" color="text-[#e8e8e8]">0.00</Field>
          <Fit className={`mt-7 ml-[47px] h-12 w-[208px] ${LABEL}`}>Start Range</Fit>
          <Field box="mt-2" text="ml-[93px] w-[87px]" step="mr-[11px]" color="text-[#e8e8e8]">0.00</Field>
        </div>
        <Icon w={77} h={24} className="mx-4 mt-[72px]">
          <path d="M32 7V3H8L3 8v9l5 4h24v-4M45 7V3h24l5 5v9l-5 4H45v-4" fill="none" stroke="#6e6e6e" strokeWidth="6" />
          <path d="M18 12h42" stroke="#7d7d7d" strokeWidth="8" />
        </Icon>
        <div className="flex w-[308px] flex-col">
          <Fit className={`ml-[47px] h-12 w-[208px] ${LABEL}`}>Sample End</Fit>
          <Field box="mt-2" text="ml-[32px] w-[209px]" step="mr-[11px]" color="text-[#e8e8e8]">399396.00</Field>
        </div>
      </div>

      <div className={`${PANEL} w-[604px] pl-5`}>
        <div className="flex w-[307px] flex-col">
          <Fit className={`ml-[30px] h-12 w-[237px] ${LABEL}`}>Release Start</Fit>
          <Field box="mt-2" text="ml-[93px] w-[87px]" step="mr-[11px]" color="text-[#e8e8e8]">0.00</Field>
          <Fit className={`mt-7 ml-[22px] h-12 w-[261px] ${LABEL}`}>Release Offset</Fit>
          <Field box="mt-2" text="ml-[93px] w-[87px]" step="mr-[11px]" color="text-[#e8e8e8]">0.00</Field>
        </div>
        <div className="ml-[26px] flex w-[235px] flex-col">
          <Fit className={`ml-[17px] h-12 w-[185px] ${LABEL}`}>Crossfade</Fit>
          <Field box="mt-2 w-[231px]" text="ml-[46px] w-[98px]" step="mr-[15px]" color="text-[#e8e8e8]">0 ms</Field>
          <Fit className={`mt-7 ml-[61px] h-12 w-[105px] ${LABEL}`}>Curve</Fit>
          <Field box="mt-2 ml-1 w-[231px]" text="ml-[63px] w-[64px]" step="mr-[15px]" color="text-[#e8e8e8]">0.0</Field>
        </div>
      </div>

      <div className={`${PANEL} w-[592px] pl-6`}>
        <div className="flex w-[272px] flex-col">
          <Fit className={`ml-[63px] h-12 w-[132px] ${LABEL}`}>Fade In</Fit>
          <Field box="mt-2" text="ml-[48px] w-[135px]" step="mr-[15px]" color="text-[#e8e8e8]">0.0 ms</Field>
          <Fit className={`mt-7 ml-[78px] h-12 w-[105px] ${LABEL}`}>Curve</Fit>
          <Field box="mt-2" text="ml-[84px] w-[64px]" step="mr-[15px]" color="text-[#c0c0c0]">0.0</Field>
        </div>
        <div className="ml-5 flex w-[252px] flex-col overflow-hidden">
          <Fit className={`ml-[47px] h-12 w-[165px] ${LABEL}`}>Fade Out</Fit>
          <Field box="mt-2 w-[272px]" text="ml-[48px] w-[135px]" step="mr-[16px]" color="text-[#e8e8e8]">0.0 ms</Field>
          <Fit className={`mt-7 ml-[78px] h-12 w-[105px] ${LABEL}`}>Curve</Fit>
          <Field box="mt-2 w-[272px]" text="ml-[84px] w-[64px]" step="mr-[16px]" color="text-[#c0c0c0]">0.0</Field>
        </div>
      </div>
    </div>
  );
}

/* ---------- page ---------- */

const Rule = () => <div className="h-2 shrink-0 bg-[#0d0d0d]" />;

function MainPanel() {
  return (
    <div className="flex h-[1924px] shrink-0 flex-col rounded-[20px] border-t-8 border-[#161616] bg-[#1b1b1b]">
      <div className="flex h-20 shrink-0 rounded-t-xl bg-linear-to-b from-[#252525] to-[#1a1a1a] pt-3 pl-7">
        <Grip />
        <div className={`ml-[22px] flex h-[67px] gap-[10px] ${TAB_TEXT}`}>
          <Tab w="w-[208px]" label="LOAD/REC" />
          <Tab w="w-[134px]" label="MACRO" />
          <Tab w="w-[96px]" label="MIDI" />
          <Tab w="w-[127px]" label="MIXER" />
          <Tab w="w-[94px]" label="EDIT" active />
          <Tab w="w-[178px]" label="AUTO/CC" />
          <Tab w="w-[174px]" label="OPTIONS" />
          <PlusTab />
        </div>
        <RoundMenu className="mr-4 ml-auto" />
      </div>
      <div className="ml-[23px] flex h-[1816px] w-[2552px] shrink-0 flex-col rounded-[32px] border-4 border-[#242424] bg-[#191919]">
        <div className="flex h-[84px] shrink-0 rounded-t-[28px] bg-linear-to-b from-[#242424] to-[#191919] pt-[17px] pl-[33px]">
          <Grip />
          <div className={`relative z-10 ml-[22px] flex h-[70px] gap-[10px] ${TAB_TEXT}`}>
            <Tab w="w-[135px]" label="SOUND" />
            <Tab w="w-[105px]" label="ZONE" />
            <Tab w="w-[193px]" label="MIDI MOD" />
            <Tab w="w-[177px]" label="MAPPING" />
            <Tab w="w-[152px]" label="SAMPLE" active />
            <Tab w="w-[226px]" label="WAVETABLE" />
            <PlusTab />
          </div>
          <RoundMenu className="-mt-[1px] mr-4 ml-auto" />
        </div>
        <div className="ml-[27px] flex h-[1700px] w-[2498px] shrink-0 flex-col rounded-[28px] border-4 border-[#262626] bg-[#171717] pt-2 pr-2 pl-[10px]">
          <SampleHeader />
          <Rule />
          <Toolbar />
          <Rule />
          <InfoBar />
          <Rule />
          <div className="flex h-[1008px] shrink-0">
            <ToolColumn />
            <div className="flex w-[2399px] shrink-0 flex-col">
              <Overview />
              <div className="flex h-[764px] shrink-0">
                <AxisLane />
                <Plot />
                <SideBars />
              </div>
              <BottomScroll />
            </div>
          </div>
          <div className="flex h-[86px] shrink-0 rounded-t-lg bg-linear-to-b from-[#202020] to-[#131313] pt-4 pl-6">
            <LowerTab box="" text="ml-[26px] w-[92px]" label="MAIN" active />
            <LowerTab box="ml-2" text="ml-[25px] w-[89px]" label="LOOP" />
            <LowerTab box="ml-2" text="ml-[26px] w-[92px]" label="SLICE" />
          </div>
          <Params />
        </div>
      </div>
    </div>
  );
}

function LeftColumn() {
  return (
    <div className="flex w-[72px] shrink-0 flex-col gap-2">
      <div className="flex h-[1924px] flex-col rounded-r-[20px] border-t-8 border-r-4 border-[#161616] bg-[#1b1b1b]">
        <RoundMenu className="mt-2 -ml-[5px]" />
        <div className="mt-4 flex h-[1816px] w-[51px] flex-col rounded-tr-[24px] rounded-br-[24px] border-y-4 border-r-4 border-[#292929] bg-[#171717]">
          <div className="mt-2 h-[80px] w-10 rounded-tr-lg border-b-4 border-[#0c0c0c] bg-linear-to-b from-[#272727] to-[#1a1a1a] pt-4">
            <div className="h-11 w-1 bg-[#3c3c3c]" />
          </div>
          <div className="mt-9 flex h-[1584px] w-8 flex-col justify-between border-r-4 border-[#3c3c3c]">
            <div className="flex h-10 w-8 items-center rounded-tr-md bg-[#424242]">
              <Icon w={20} h={14} className="fill-[#15152a]">
                <path d="M8 0h4l9 14H0z" />
              </Icon>
            </div>
            <div className="flex h-10 w-8 items-center rounded-br-md bg-[#424242]">
              <Icon w={20} h={14} className="fill-[#15152a]">
                <path d="M0 0h21l-9 14H8z" />
              </Icon>
            </div>
          </div>
        </div>
      </div>
      <div className="h-[76px] rounded-tr-[20px] border-t-8 border-r-4 border-[#161616] bg-linear-to-b from-[#2a2a2a] to-[#161616] pt-2">
        <RoundMenu />
      </div>
    </div>
  );
}

export default function App() {
  return (
    <div className="relative flex h-[2012px] w-[2704px] gap-2 overflow-hidden bg-[#4b4d4f] pt-1">
      <LeftColumn />
      <div className="flex w-[2596px] shrink-0 flex-col gap-2">
        <MainPanel />
        <div className="flex h-[90px] shrink-0 rounded-t-[20px] border-t-8 border-[#161616] bg-linear-to-b from-[#2b2b2b] to-[#181818] pl-6">
          <div className="pt-4">
            <Grip />
          </div>
          <div className="mt-3 ml-[17px] w-[2406px] rounded-t-[20px] border-x-[6px] border-t-8 border-[#131313] bg-linear-to-b from-[#2b2b2b] to-[#1d1d1d]" />
          <RoundMenu className="mt-[7px] ml-6" />
        </div>
      </div>
      <div className="-mt-1 flex w-5 shrink-0 flex-col gap-2">
        <div className="h-[1956px] rounded-bl-[20px] bg-[#1a1a1a]" />
        <div className="h-12 rounded-tl-[20px] border-t-8 border-[#161616] bg-[#232323]" />
      </div>

      {/* callout */}
      <svg width={2704} height={2012} viewBox="0 0 2704 2012" className="pointer-events-none absolute top-0 left-0 z-20 drop-shadow-[2px_5px_4px_rgba(0,0,0,0.6)]">
        <rect x="2018" y="1391" width="84" height="72" rx="3" fill="none" stroke="#ff2a05" strokeWidth="16" strokeLinejoin="round" />
        <path d="M1342 1657L1974 1434 1964 1420 2029 1430 1982 1476V1460L1345 1663Z" fill="#ff2a05" />
      </svg>
      <div className="absolute top-[1638px] left-[952px] z-20 font-['Inter','Liberation_Sans',sans-serif] text-[143px] leading-[172px] font-semibold text-[#ff2a05] [word-spacing:0.04em] drop-shadow-[2px_5px_3px_rgba(0,0,0,0.6)] [-webkit-text-stroke:16px_white] [paint-order:stroke_fill] [stroke-linejoin:round]">
        <Fit className="w-[667px]">Zoom out</Fit>
      </div>
    </div>
  );
}
